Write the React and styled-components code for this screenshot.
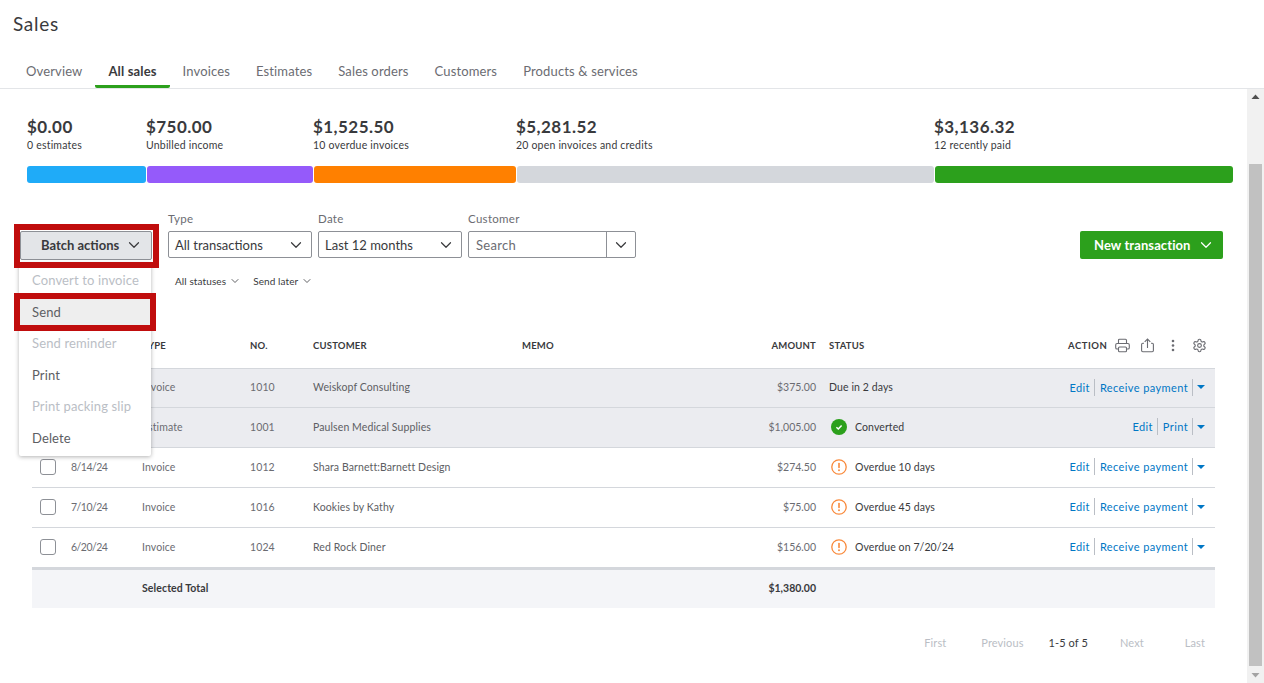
import React from 'react';
import styled, { createGlobalStyle } from 'styled-components';
import { ChevronDown } from 'lucide-react';

const GlobalStyle = createGlobalStyle`
  html, body {
    margin: 0;
    padding: 0;
    background: #ffffff;
  }
  body {
    font-family: "Lato", "Noto Sans", sans-serif;
    color: #393a3d;
  }
  * {
    box-sizing: border-box;
  }
`;

const Page = styled.div`
  width: 1264px;
  height: 683px;
  overflow: hidden;
  position: relative;
  background: #fff;
`;

const PageHeader = styled.header`
  height: 89px;
  border-bottom: 1px solid #e3e5e8;
  display: flex;
  flex-direction: column;
`;

const Title = styled.h1`
  margin: 0;
  padding: 12px 0 0 13px;
  height: 55px;
  font-size: 19px;
  line-height: 24px;
  font-weight: 400;
  letter-spacing: 0.7px;
  color: #393a3d;
`;

const Tabs = styled.nav`
  display: flex;
  height: 33px;
  padding-left: 13px;
`;

const Tab = styled.a`
  padding: 0 13px;
  height: 33px;
  line-height: 32px;
  font-size: 13px;
  letter-spacing: 0.14px;
  color: ${(p) => (p.$active ? '#393a3d' : '#6b6c72')};
  font-weight: ${(p) => (p.$active ? 700 : 400)};
  border-bottom: ${(p) => (p.$active ? '3px solid #2ca01c' : '3px solid transparent')};
  border-radius: 0 0 2px 2px;
  white-space: nowrap;
`;

const Body = styled.div`
  display: flex;
  height: 594px;
`;

const Content = styled.main`
  width: 1247px;
  padding: 0 14px 0 27px;
`;

const Scrollbar = styled.div`
  width: 17px;
  background: #f1f1f1;
  display: flex;
  flex-direction: column;
  align-items: center;
`;

const ScrollArrow = styled.div`
  height: 17px;
  width: 17px;
  display: flex;
  align-items: center;
  justify-content: center;
`;

const ScrollThumb = styled.div`
  width: 13px;
  height: 503px;
  margin-top: 58px;
  background: #c1c1c1;
`;

const Summary = styled.section`
  padding-top: 28px;
  display: grid;
  grid-template-columns: 120px 167px 203px 418px 299px;
  width: 1207px;
  height: 95px;
`;

const StatValue = styled.div`
  font-size: 17px;
  line-height: 20px;
  font-weight: 700;
  letter-spacing: 0.45px;
  color: #393a3d;
`;

const StatLabel = styled.div`
  font-size: 10.5px;
  line-height: 14px;
  letter-spacing: 0.2px;
  color: #393a3d;
  margin-top: 1px;
  height: 28px;
`;

const Stat = styled.div`
  display: flex;
  flex-direction: column;
  padding-right: 1px;

  &:not(:first-child) ${StatValue}, &:not(:first-child) ${StatLabel} {
    margin-left: -1px;
  }
`;

const Bar = styled.div`
  height: 17px;
  background: ${(p) => p.$color};
  border-radius: 3px;
`;

const FilterRow = styled.section`
  display: flex;
  align-items: flex-start;
  height: 90px;
  padding-top: 28px;
  margin-left: -7px;
  width: 1203px;
`;

const BatchButton = styled.button`
  width: 132px;
  height: 29px;
  margin-top: 19px;
  margin-right: 16px;
  background: #e3e5e8;
  border: 1px solid #8d9096;
  border-radius: 2px;
  font: 700 13px "Lato", sans-serif;
  color: #393a3d;
  display: flex;
  align-items: center;
  gap: 6px;
  padding: 0 0 1px 20px;
`;

const Field = styled.div`
  display: flex;
  flex-direction: column;
  margin-right: 6px;
  width: ${(p) => p.$width}px;
`;

const FieldLabel = styled.label`
  font-size: 11.5px;
  line-height: 14px;
  letter-spacing: 0.3px;
  color: #6b6c72;
  height: 19px;
`;

const SelectBox = styled.div`
  height: 27px;
  border: 1px solid #8d9096;
  border-radius: 2px;
  display: flex;
  align-items: center;
  justify-content: space-between;
  padding: 0 6px 0 6px;
  font-size: 13px;
  color: #393a3d;
  background: #fff;
`;

const ComboBox = styled.div`
  height: 27px;
  border: 1px solid #8d9096;
  border-radius: 2px;
  display: flex;
  align-items: stretch;
  font-size: 13px;
  letter-spacing: 0.3px;
  color: #6b6c72;
`;

const ComboInput = styled.div`
  flex: 1;
  padding-left: 7px;
  line-height: 27px;
  border-right: 1px solid #8d9096;
`;

const ComboToggle = styled.div`
  width: 28px;
  display: flex;
  align-items: center;
  justify-content: center;
`;

const NewButton = styled.button`
  margin-left: auto;
  margin-top: 19px;
  width: 143px;
  height: 28px;
  background: #2ca01c;
  color: #fff;
  border: none;
  border-radius: 2px;
  font: 700 13px "Lato", sans-serif;
  letter-spacing: 0.1px;
  display: flex;
  align-items: center;
  gap: 6px;
  padding: 0 0 0 14px;
`;

const Chips = styled.div`
  display: flex;
  gap: 12px;
  margin-left: 148px;
  height: 51px;
`;

const Chip = styled.div`
  display: flex;
  align-items: center;
  gap: 3px;
  height: 14px;
  font-size: 10px;
  letter-spacing: 0.1px;
  color: #393a3d;
`;

const Table = styled.div`
  width: 1183px;
  margin-left: 5px;
`;

const Row = styled.div`
  display: grid;
  grid-template-columns: 39px 71px 108px 63px 209px 1fr 13px 386px;
  align-items: center;
  height: ${(p) => p.$height || 40}px;
  padding-bottom: 2px;
  font-size: 10.5px;
  letter-spacing: 0.1px;
  color: #6b6c72;
  background: ${(p) => p.$bg || '#fff'};
  border-bottom: 1px solid #d4d7dc;
`;

const HeadRow = styled(Row)`
  padding-bottom: 3px;
  font-size: 9.5px;
  font-weight: 700;
  letter-spacing: 0.2px;
  color: #393a3d;
`;

const TotalRow = styled(Row)`
  border-bottom: none;
  border-top: 2px solid #d4d7dc;
  font-weight: 700;
  color: #393a3d;
  background: #f4f5f8;
`;

const HeadMemo = styled.div`
  grid-column: 6;
  display: flex;
  justify-content: space-between;
`;

const TotalLabel = styled.div`
  grid-column: 3 / 5;
`;

const CheckCell = styled.div`
  padding-left: 8px;
  display: flex;
`;

const Checkbox = styled.span`
  width: 16px;
  height: 16px;
  border: 1px solid #8d9096;
  border-radius: 3px;
  background: #fff;
`;

const DateCell = styled.div`
  letter-spacing: -0.5px;
`;

const Customer = styled.div`
  color: #5d5e63;
  white-space: nowrap;
`;

const Amount = styled.div`
  text-align: right;
  grid-column: 6;
  letter-spacing: 0;
`;

const Status = styled.div`
  grid-column: 8;
  display: flex;
  align-items: center;
  color: #393a3d;
`;

const StatusIcon = styled.span`
  width: 16px;
  height: 16px;
  margin: 0 8px 0 2px;
  display: inline-flex;
`;

const Actions = styled.div`
  margin-left: auto;
  display: flex;
  align-items: center;
  height: 17px;
  padding-right: 10px;
  font-size: 11px;
  letter-spacing: 0.4px;
  color: #0077c5;
`;

const ActionLink = styled.a`
  padding: 0 4px 0 5px;
  line-height: 17px;
  border-right: 1px solid #babec5;
  white-space: nowrap;
`;

const Caret = styled.span`
  width: 0;
  height: 0;
  margin-left: 4px;
  border-left: 4px solid transparent;
  border-right: 4px solid transparent;
  border-top: 4px solid #0077c5;
`;

const HeadAction = styled.div`
  grid-column: 8;
  display: flex;
  align-items: center;
`;

const HeadIcons = styled.div`
  margin-left: auto;
  display: flex;
  align-items: center;
  padding-right: 3px;
`;

const HeadActionLabel = styled.span`
  margin-right: 2px;
  letter-spacing: 0.5px;
`;

const IconSlot = styled.span`
  width: 25.7px;
  display: flex;
  justify-content: center;
`;

const Pager = styled.div`
  display: flex;
  justify-content: flex-end;
  align-items: center;
  width: 1183px;
  margin: 27px 0 0 5px;
  padding-right: 10px;
  height: 14px;
  font-size: 11px;
  letter-spacing: 0.1px;
`;

const PagerItem = styled.span`
  color: ${(p) => (p.$current ? '#393a3d' : '#babec5')};
  margin-left: ${(p) => p.$gap || 0}px;
`;

const Menu = styled.div`
  position: absolute;
  left: 19px;
  top: 263px;
  width: 132px;
  height: 193px;
  background: #fff;
  border-radius: 2px;
  box-shadow: 0 1px 4px rgba(0, 0, 0, 0.3);
  padding-top: 2px;
`;

const MenuItem = styled.div`
  height: 31.6px;
  padding-left: 13px;
  line-height: 31px;
  font-size: 13px;
  letter-spacing: 0.13px;
  white-space: nowrap;
  color: ${(p) => (p.$disabled ? '#babec5' : '#5d5e63')};
  background: ${(p) => (p.$hover ? '#eeeeee' : 'transparent')};
`;

const Highlight = styled.div`
  position: absolute;
  left: 14px;
  top: ${(p) => p.$top}px;
  width: ${(p) => p.$width}px;
  height: ${(p) => p.$height}px;
  border: 6px solid #c00d0d;
  pointer-events: none;
`;

const Chevron = ({ size = 16, color = '#393a3d', width = 1.6 }) => (
  <ChevronDown size={size} color={color} strokeWidth={width} />
);

const WarnIcon = () => (
  <svg width="16" height="16" viewBox="0 0 16 16">
    <circle cx="8" cy="8" r="7.2" fill="none" stroke="#f98a3c" strokeWidth="1.3" />
    <rect x="7.2" y="3.8" width="1.6" height="5.4" rx="0.8" fill="#f98a3c" />
    <circle cx="8" cy="11.2" r="0.95" fill="#f98a3c" />
  </svg>
);

const DoneIcon = () => (
  <svg width="16" height="16" viewBox="0 0 16 16">
    <circle cx="8" cy="8" r="8" fill="#2ca01c" />
    <path d="M5.4 8.2l1.9 1.8L10.6 6.4" fill="none" stroke="#fff" strokeWidth="1.5" />
  </svg>
);

const PrinterIcon = () => (
  <svg width="15" height="15" viewBox="0 0 15 15" fill="none" stroke="#6b6c72" strokeWidth="1.1">
    <path d="M3.5 5.5V2.2c0-.6.4-1 1-1h6c.6 0 1 .4 1 1v3.3" />
    <path d="M3.4 11H2c-.7 0-1.3-.6-1.3-1.3V7c0-.8.6-1.5 1.4-1.5h10.8c.8 0 1.4.7 1.4 1.5v2.7c0 .7-.6 1.3-1.3 1.3h-1.4" />
    <rect x="3.5" y="9" width="8" height="4.8" rx="1" />
  </svg>
);

const ExportIcon = () => (
  <svg width="13" height="15" viewBox="0 0 13 15" fill="none" stroke="#6b6c72" strokeWidth="1.1">
    <path d="M3 5.2H1.8C1.1 5.2.6 5.7.6 6.4v6.2c0 .7.5 1.2 1.2 1.2h9.4c.7 0 1.2-.5 1.2-1.2V6.4c0-.7-.5-1.2-1.2-1.2H10" />
    <path d="M6.5 10V1.2M3.7 3.8L6.5 1l2.8 2.8" />
  </svg>
);

const DotsIcon = () => (
  <svg width="4" height="13" viewBox="0 0 4 13" fill="#6b6c72">
    <circle cx="2" cy="2" r="1.3" />
    <circle cx="2" cy="6.5" r="1.3" />
    <circle cx="2" cy="11" r="1.3" />
  </svg>
);

const GearIcon = () => (
  <svg width="15" height="15" viewBox="0 0 24 24" fill="none" stroke="#6b6c72" strokeWidth="1.8" strokeLinecap="round" strokeLinejoin="round">
    <path d="M12.22 2h-.44a2 2 0 0 0-2 2v.18a2 2 0 0 1-1 1.73l-.43.25a2 2 0 0 1-2 0l-.15-.08a2 2 0 0 0-2.73.73l-.22.38a2 2 0 0 0 .73 2.73l.15.1a2 2 0 0 1 1 1.72v.51a2 2 0 0 1-1 1.74l-.15.09a2 2 0 0 0-.73 2.73l.22.38a2 2 0 0 0 2.73.73l.15-.08a2 2 0 0 1 2 0l.43.25a2 2 0 0 1 1 1.73V20a2 2 0 0 0 2 2h.44a2 2 0 0 0 2-2v-.18a2 2 0 0 1 1-1.73l.43-.25a2 2 0 0 1 2 0l.15.08a2 2 0 0 0 2.73-.73l.22-.39a2 2 0 0 0-.73-2.73l-.15-.08a2 2 0 0 1-1-1.74v-.5a2 2 0 0 1 1-1.74l.15-.09a2 2 0 0 0 .73-2.73l-.22-.38a2 2 0 0 0-2.73-.73l-.15.08a2 2 0 0 1-2 0l-.43-.25a2 2 0 0 1-1-1.73V4a2 2 0 0 0-2-2z" />
    <circle cx="12" cy="12" r="3" />
  </svg>
);

const tabs = ['Overview', 'All sales', 'Invoices', 'Estimates', 'Sales orders', 'Customers', 'Products & services'];

const stats = [
  { value: '$0.00', label: '0 estimates', color: '#1fabf8' },
  { value: '$750.00', label: 'Unbilled income', color: '#955afa' },
  { value: '$1,525.50', label: '10 overdue invoices', color: '#ff8000' },
  { value: '$5,281.52', label: '20 open invoices and credits', color: '#d4d7dc' },
  { value: '$3,136.32', label: '12 recently paid', color: '#2ca01c' },
];

// first two rows sit behind the open menu, so their dates don't show
const rows = [
  { date: '', type: 'Invoice', no: '1010', customer: 'Weiskopf Consulting', amount: '$375.00', status: 'Due in 2 days', selected: true },
  { date: '', type: 'Estimate', no: '1001', customer: 'Paulsen Medical Supplies', amount: '$1,005.00', status: 'Converted', done: true, selected: true },
  { date: '8/14/24', type: 'Invoice', no: '1012', customer: 'Shara Barnett:Barnett Design', amount: '$274.50', status: 'Overdue 10 days', warn: true },
  { date: '7/10/24', type: 'Invoice', no: '1016', customer: 'Kookies by Kathy', amount: '$75.00', status: 'Overdue 45 days', warn: true },
  { date: '6/20/24', type: 'Invoice', no: '1024', customer: 'Red Rock Diner', amount: '$156.00', status: 'Overdue on 7/20/24', warn: true },
];

export default function App() {
  return (
    <Page>
      <GlobalStyle />
      <PageHeader>
        <Title>Sales</Title>
        <Tabs>
          {tabs.map((t) => (
            <Tab key={t} $active={t === 'All sales'}>{t}</Tab>
          ))}
        </Tabs>
      </PageHeader>
      <Body>
        <Content>
          <Summary>
            {stats.map((s) => (
              <Stat key={s.value}>
                <StatValue>{s.value}</StatValue>
                <StatLabel>{s.label}</StatLabel>
                <Bar $color={s.color} />
              </Stat>
            ))}
          </Summary>
          <FilterRow>
            <BatchButton>
              Batch actions
              <Chevron size={18} />
            </BatchButton>
            <Field $width={144}>
              <FieldLabel>Type</FieldLabel>
              <SelectBox>All transactions<Chevron size={18} /></SelectBox>
            </Field>
            <Field $width={144}>
              <FieldLabel>Date</FieldLabel>
              <SelectBox>Last 12 months<Chevron size={18} /></SelectBox>
            </Field>
            <Field $width={168}>
              <FieldLabel>Customer</FieldLabel>
              <ComboBox>
                <ComboInput>Search</ComboInput>
                <ComboToggle><Chevron size={18} /></ComboToggle>
              </ComboBox>
            </Field>
            <NewButton>
              New transaction
              <Chevron size={18} color="#fff" />
            </NewButton>
          </FilterRow>
          <Chips>
            <Chip>All statuses<Chevron size={12} /></Chip>
            <Chip>Send later<Chevron size={12} /></Chip>
          </Chips>
          <Table>
            <HeadRow $height={44}>
              <div />
              <div />
              <div>TYPE</div>
              <div>NO.</div>
              <div>CUSTOMER</div>
              <HeadMemo>
                <span>MEMO</span>
                <span>AMOUNT</span>
              </HeadMemo>
              <HeadAction>
                STATUS
                <HeadIcons>
                  <HeadActionLabel>ACTION</HeadActionLabel>
                  <IconSlot><PrinterIcon /></IconSlot>
                  <IconSlot><ExportIcon /></IconSlot>
                  <IconSlot><DotsIcon /></IconSlot>
                  <IconSlot><GearIcon /></IconSlot>
                </HeadIcons>
              </HeadAction>
            </HeadRow>
            {rows.map((r, i) => (
              <Row key={r.no} $height={i === 0 ? 39 : 40} $bg={r.selected ? '#ebecf0' : '#fff'}>
                <CheckCell><Checkbox /></CheckCell>
                <DateCell>{r.date}</DateCell>
                <div>{r.type}</div>
                <div>{r.no}</div>
                <Customer>{r.customer}</Customer>
                <Amount>{r.amount}</Amount>
                <Status>
                  {r.done && <StatusIcon><DoneIcon /></StatusIcon>}
                  {r.warn && <StatusIcon><WarnIcon /></StatusIcon>}
                  {r.status}
                  <Actions>
                    <ActionLink>Edit</ActionLink>
                    <ActionLink>{r.done ? 'Print' : 'Receive payment'}</ActionLink>
                    <Caret />
                  </Actions>
                </Status>
              </Row>
            ))}
            <TotalRow $height={40}>
              <TotalLabel>Selected Total</TotalLabel>
              <Amount>$1,380.00</Amount>
            </TotalRow>
          </Table>
          <Pager>
            <PagerItem>First</PagerItem>
            <PagerItem $gap={35}>Previous</PagerItem>
            <PagerItem $current $gap={25}>1-5 of 5</PagerItem>
            <PagerItem $gap={32}>Next</PagerItem>
            <PagerItem $gap={41}>Last</PagerItem>
          </Pager>
        </Content>
        <Scrollbar>
          <ScrollArrow>
            <svg width="9" height="6" viewBox="0 0 9 6"><path d="M4.5 0.5L8.5 5H0.5z" fill="#505050" /></svg>
          </ScrollArrow>
          <ScrollThumb />
          <ScrollArrow>
            <svg width="9" height="6" viewBox="0 0 9 6"><path d="M4.5 5.5L8.5 1H0.5z" fill="#a3a3a3" /></svg>
          </ScrollArrow>
        </Scrollbar>
      </Body>
      <Menu>
        <MenuItem $disabled>Convert to invoice</MenuItem>
        <MenuItem $hover>Send</MenuItem>
        <MenuItem $disabled>Send reminder</MenuItem>
        <MenuItem>Print</MenuItem>
        <MenuItem $disabled>Print packing slip</MenuItem>
        <MenuItem>Delete</MenuItem>
      </Menu>
      <Highlight $top={224} $width={145} $height={44} />
      <Highlight $top={293} $width={142} $height={38} />
    </Page>
  );
}
